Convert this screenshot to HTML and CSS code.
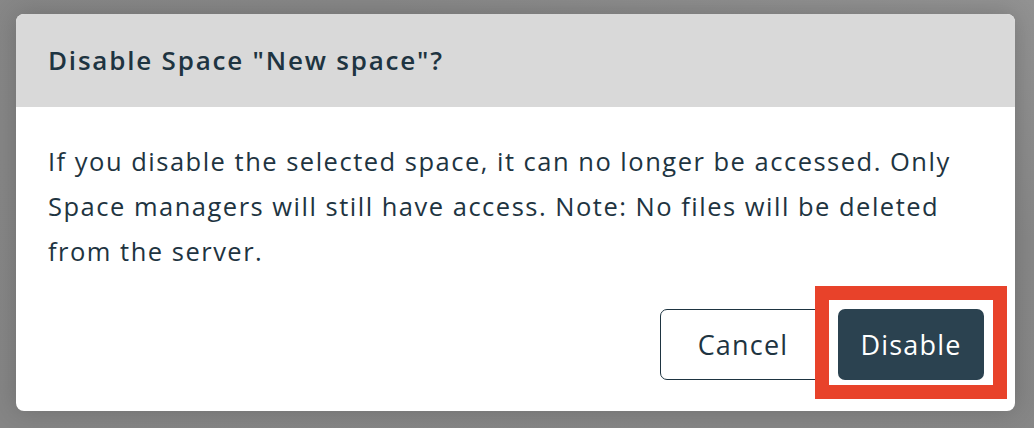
FILE: index.html
```html
<!DOCTYPE html>
<html lang="en">
<head>
<meta charset="utf-8">
<title>Disable Space</title>
<link rel="stylesheet" href="styles.css">
</head>
<body>
<div class="backdrop">
  <div class="modal" role="dialog" aria-labelledby="modal-title">
    <div class="modal-header">
      <h2 class="modal-title" id="modal-title">Disable Space "New space"?</h2>
    </div>
    <div class="modal-body">
      <p class="modal-message">If you disable the selected space, it can no longer be accessed. Only Space managers will still have access. Note: No files will be deleted from the server.</p>
      <div class="modal-actions">
        <button class="btn btn-secondary" type="button">Cancel</button>
        <div class="highlight-wrap">
          <button class="btn btn-primary" type="button">Disable</button>
          <span class="highlight-frame" aria-hidden="true"></span>
        </div>
      </div>
    </div>
  </div>
</div>
</body>
</html>
```

FILE: styles.css
```css
* { box-sizing: border-box; }

html, body {
  margin: 0;
  padding: 0;
  height: 100%;
}

body {
  font-family: "Open Sans", "Noto Sans", sans-serif;
  color: #1e3441;
  background: linear-gradient(200deg, #929292 0%, #878787 30%, #858585 100%);
}

.backdrop {
  padding: 14px 19px 17px 16px;
  height: 100%;
}

.modal {
  width: 999px;
  height: 397px;
  background: #ffffff;
  border-radius: 8px;
  overflow: hidden;
  display: flex;
  flex-direction: column;
  box-shadow: 0 0 24px rgba(0, 0, 0, 0.18);
}

.modal-header {
  background: #d9d9d9;
  height: 93px;
  display: flex;
  align-items: center;
  padding: 0 32px;
  flex: 0 0 auto;
}

.modal-title {
  margin: 0;
  font-size: 26px;
  font-weight: 600;
  letter-spacing: 1.8px;
  line-height: 30px;
  color: #1e3441;
  position: relative;
  top: -1px;
}

.modal-body {
  padding: 32px 24px 31px 32px;
  display: flex;
  flex-direction: column;
  flex: 1 1 auto;
}

.modal-message {
  margin: 0;
  font-size: 25.5px;
  letter-spacing: 1.5px;
  line-height: 45px;
  color: #1e3441;
}

.modal-actions {
  margin-top: auto;
  margin-right: 7px;
  display: flex;
  justify-content: flex-end;
  align-items: center;
  gap: 12px;
}

.btn {
  font-family: inherit;
  font-size: 27px;
  letter-spacing: 1.2px;
  height: 71px;
  border-radius: 7px;
  padding: 0;
  cursor: pointer;
}

.btn-secondary {
  width: 166px;
  background: #ffffff;
  color: #1e3441;
  border: 1.5px solid #1e3441;
}

.btn-primary {
  width: 146px;
  background: #2b4250;
  color: #ffffff;
  border: none;
}

.highlight-wrap {
  position: relative;
  display: flex;
}

.highlight-frame {
  position: absolute;
  top: -23px;
  left: -23px;
  right: -23px;
  bottom: -19px;
  border: 14px solid #e8422a;
  pointer-events: none;
}
```
